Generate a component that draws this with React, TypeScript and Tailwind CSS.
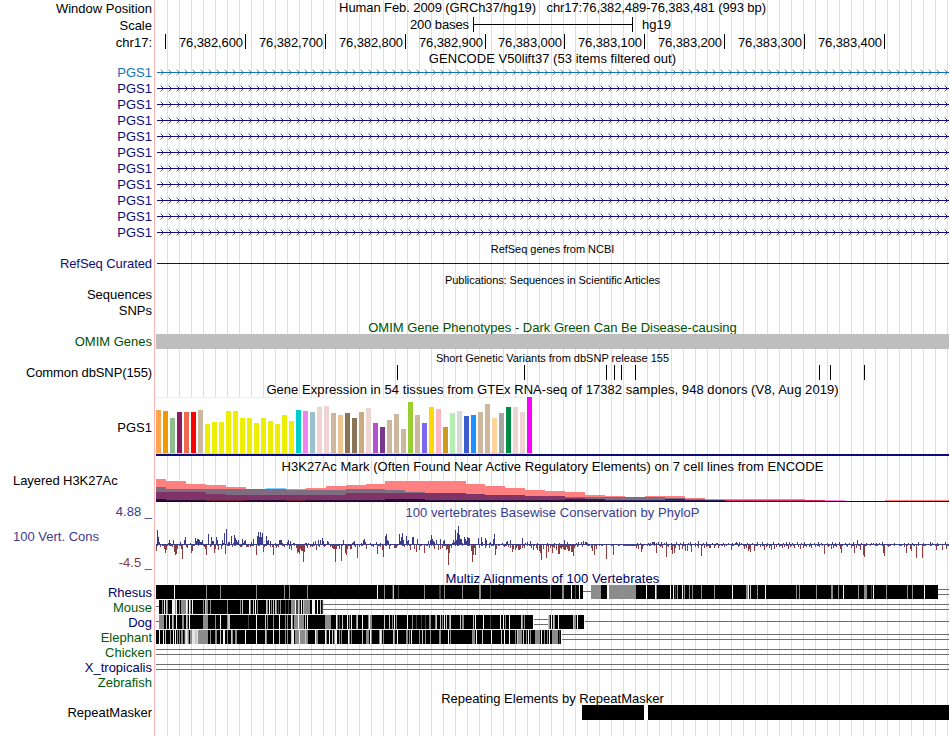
import type { ReactNode } from "react";

const NAVY = "#0c0c78";
const BLUE = "#1274b4";

type Stripe = [number, number, string];

const G = "#8c8c8c";
const L = "#c8c8c8";
const W = "#f4f4f4";
const D = "#444444";

const shift = (origin: number, list: Stripe[]): Stripe[] =>
  list.map(([x, w, c]) => [origin + Math.round(x / 3), w, c]);

const RHESUS: Stripe[] = [
  ...shift(150, [[72, 1, W], [168, 1, G], [210, 1, G], [318, 1, G], [402, 1, G], [417, 1, G], [471, 1, G], [681, 1, W], [702, 1, G]]),
  ...shift(380, [[36, 1, D], [39, 1, L], [54, 1, D], [132, 1, G], [177, 2, D], [192, 1, G], [246, 1, G], [297, 2, G], [330, 1, D], [510, 1, G], [546, 2, G], [573, 1, W], [585, 1, D], [597, 1, W], [633, 10, G]]),
  ...shift(600, [[0, 1, G], [21, 1, W], [24, 1, "#fff"], [27, 27, G], [138, 1, W], [165, 1, W], [168, 1, G], [210, 1, W], [219, 1, W], [225, 1, D], [231, 1, G], [246, 1, W], [252, 1, G], [267, 1, G], [276, 1, G], [303, 1, G], [342, 1, G], [396, 1, W], [438, 2, G], [444, 1, W], [450, 1, L], [471, 1, G], [495, 1, W], [588, 1, G], [597, 1, G], [648, 1, G], [693, 2, G], [714, 1, G], [729, 1, W], [774, 1, G], [792, 3, G], [813, 1, D], [819, 1, W], [858, 1, G], [921, 1, G], [936, 1, G], [972, 1, W]]),
];

const MOUSE: Stripe[] = shift(150, [
  [36, 1, G], [42, 1, W], [48, 1, L], [51, 1, G], [66, 3, W], [75, 1, G], [78, 1, W], [87, 1, G], [93, 1, G], [96, 4, G], [108, 1, W], [111, 1, L], [117, 1, W], [120, 1, G], [126, 1, W], [159, 1, G], [165, 1, L], [168, 2, G], [180, 1, G], [231, 1, G], [270, 1, G], [276, 1, L], [297, 1, W], [300, 1, G], [309, 1, L], [315, 1, W], [321, 1, G], [348, 1, L], [351, 1, G], [357, 1, W], [363, 1, G], [369, 1, L], [375, 1, L], [378, 1, G], [384, 1, D], [390, 1, G], [405, 1, D], [414, 1, D], [423, 4, G], [435, 1, W], [438, 2, D], [444, 1, L], [447, 1, G], [453, 1, W], [459, 1, L], [462, 1, G], [465, 5, G], [486, 3, W], [501, 1, W], [510, 1, L], [516, 1, D],
]);

const DOG: Stripe[] = [
  ...shift(150, [[27, 5, G], [48, 1, L], [57, 1, W], [66, 1, L], [69, 1, G], [78, 1, W], [96, 2, G], [108, 1, L], [111, 1, G], [117, 1, W], [159, 5, G], [195, 1, G], [210, 1, W], [231, 1, G], [234, 2, L], [294, 1, D], [318, 1, W], [345, 1, L], [351, 1, G], [369, 1, G], [387, 1, W], [405, 1, G], [411, 1, G], [423, 1, W], [426, 1, G], [432, 4, G], [444, 1, W], [447, 5, G], [465, 1, L], [471, 1, W], [525, 6, G], [558, 1, W], [561, 1, G], [567, 1, D], [576, 1, L], [591, 1, W], [597, 1, G], [603, 1, W], [618, 1, G], [621, 1, L], [636, 1, W], [654, 1, G], [657, 1, W], [660, 2, G]]),
  ...shift(380, [[12, 1, L], [27, 1, L], [36, 1, G], [42, 1, W], [48, 1, G], [81, 1, W], [96, 1, G], [108, 1, D], [123, 1, D], [135, 1, D], [147, 2, G], [165, 1, G], [168, 1, L], [180, 1, L], [186, 1, G], [192, 1, W], [198, 1, L], [207, 1, G], [210, 1, L], [240, 1, L], [246, 2, G], [279, 1, L], [285, 1, W], [309, 1, W], [330, 1, D], [360, 1, W], [369, 1, W], [375, 1, G], [387, 1, W], [423, 1, L], [426, 1, G], [432, 1, G], [504, 1, L], [507, 1, G], [513, 1, W], [519, 1, L], [522, 1, G], [534, 1, W], [579, 1, L], [582, 1, G], [585, 1, G], [591, 1, W]]),
];

const ELEPHANT: Stripe[] = [
  ...shift(150, [[27, 1, W], [39, 1, W], [45, 1, L], [60, 1, G], [69, 1, W], [75, 1, W], [81, 1, G], [87, 1, G], [93, 2, G], [102, 1, D], [105, 1, L], [108, 1, W], [111, 1, L], [114, 1, G], [120, 2, G], [126, 3, "#e4e4e4"], [135, 2, L], [141, 1, "#e4e4e4"], [144, 10, G], [180, 1, G], [195, 2, G], [210, 1, L], [219, 2, W], [231, 1, G], [243, 1, L], [246, 1, G], [255, 2, G], [285, 1, W], [318, 1, W], [345, 1, L], [348, 1, G], [369, 1, W], [387, 1, L], [405, 1, G], [411, 1, G], [423, 1, L], [426, 2, W], [435, 4, G], [447, 1, W], [450, 5, G], [465, 1, L], [468, 2, G], [495, 1, W], [498, 1, G], [501, 1, G], [525, 1, W], [528, 1, G], [537, 1, W], [546, 1, L], [552, 1, G], [555, 2, W], [567, 1, G], [573, 1, G], [594, 1, W], [597, 1, G], [603, 1, G], [636, 1, L], [648, 3, G], [660, 1, W], [663, 1, G], [687, 1, G], [690, 1, W], [699, 1, L]]),
  ...shift(380, [[3, 1, L], [9, 1, G], [39, 1, L], [42, 1, G], [51, 1, W], [78, 2, G], [87, 1, G], [93, 1, W], [117, 1, G], [126, 1, L], [135, 1, G], [150, 1, G], [177, 2, G], [204, 1, W], [210, 1, G], [276, 3, G], [288, 1, W], [306, 1, L], [333, 1, W], [363, 1, L], [372, 1, W], [387, 1, W], [405, 1, G], [411, 1, L], [414, 4, G], [429, 1, L], [438, 1, G], [444, 1, W], [450, 1, G], [465, 5, G], [483, 1, W], [492, 1, G], [501, 1, G], [507, 1, W], [516, 6, G], [537, 1, D]]),
];

const GTEX: [number, string][] = [
  [410, "#ffa54f"], [411, "#ee9a00"], [418, "#8fbc8f"], [412, "#8b1c62"], [412, "#ee6a50"], [412, "#ff0000"], [410, "#cdb79e"],
  [424, "#eeee00"], [422, "#eeee00"], [422, "#eeee00"], [411, "#eeee00"], [411, "#eeee00"], [418, "#eeee00"], [418, "#eeee00"],
  [423, "#eeee00"], [418, "#eeee00"], [421, "#eeee00"], [424, "#eeee00"], [415, "#eeee00"], [421, "#eeee00"],
  [410, "#00cdcd"], [411, "#ee82ee"], [412, "#9ac0cd"], [407, "#eed5d2"], [406, "#eed5d2"], [413, "#cdb79e"], [415, "#eec591"],
  [413, "#8b7355"], [418, "#8b7355"], [412, "#cdaa7d"], [408, "#eed5d2"], [423, "#b452cd"], [427, "#7a378b"], [420, "#cdb79e"],
  [414, "#cdb79e"], [429, "#cdb79e"], [402, "#9acd32"], [415, "#cdb79e"], [423, "#7a67ee"], [407, "#ffd700"], [409, "#ffb6c1"],
  [427, "#cd9b1d"], [413, "#b4eeb4"], [411, "#d9d9d9"], [416, "#3a5fcd"], [415, "#1e90ff"], [412, "#cdb79e"], [404, "#cdb79e"],
  [418, "#ffd39b"], [413, "#a6a6a6"], [407, "#008b45"], [407, "#eed5d2"], [412, "#eed5d2"], [397, "#ff00ff"],
];

// Each layer is a list of [start x, top y]; a step lasts until the next one.
const H3K: { color: string; steps: [number, number][]; end: number }[] = [
  { color: "#80d0ff", steps: [[266, 488]], end: 286 },
  { color: "#ff8080", end: 949, steps: [[156, 479], [166, 481], [186, 484], [206, 485], [226, 487], [246, 489], [266, 490], [286, 489], [306, 488], [326, 486], [346, 485], [366, 484], [385, 481], [466, 484], [485, 486], [505, 488], [525, 490], [545, 491], [565, 492], [585, 495], [605, 496], [625, 497], [645, 496], [685, 498], [705, 499], [805, 500], [845, 501], [885, 500]] },
  { color: "#806c80", end: 705, steps: [[156, 487], [166, 489], [286, 490], [326, 490], [346, 489], [385, 490], [405, 492], [425, 494], [466, 496], [565, 497], [665, 498], [685, 499]] },
  { color: "#803366", end: 605, steps: [[156, 492], [206, 494], [226, 495], [346, 493], [466, 494], [485, 495], [525, 496], [565, 498], [585, 499]] },
  { color: "#e0205c", end: 885, steps: [[705, 500], [845, 501]] },
  { color: "#ff80e0", end: 845, steps: [[825, 500]] },
  { color: "#2c2060", end: 725, steps: [[565, 499], [605, 500], [665, 499], [685, 500]] },
  { color: "#2a0f38", end: 605, steps: [[156, 499], [166, 500], [206, 500], [286, 500], [385, 499], [425, 500]] },
];

const wig = (origin: number, list: number[][]) => list.map(([x, h]) => [origin + Math.round(x / 3), h]);

const UP = [
  ...wig(150, [[21, 15], [24, 8], [27, 3], [33, 1], [39, 1], [54, 2], [57, 5], [60, 2], [69, 5], [72, 1], [90, 3], [102, 5], [105, 8], [120, 2], [135, 7], [138, 4], [141, 6], [144, 6], [147, 5], [150, 3], [153, 3], [156, 5], [174, 11], [177, 1], [183, 8], [186, 4], [189, 4], [198, 8], [201, 5], [210, 1], [216, 5], [219, 2], [222, 12], [228, 16], [231, 1], [234, 3], [237, 3], [243, 9], [249, 2], [252, 10], [255, 7], [258, 5], [261, 3], [264, 5], [276, 6], [279, 2], [282, 4], [285, 5], [303, 3], [309, 6], [321, 9], [324, 13], [327, 8], [330, 13], [333, 8], [336, 12], [348, 9], [351, 4], [354, 5], [360, 4], [363, 1], [375, 2], [387, 5], [390, 5], [393, 5], [396, 2], [411, 3], [414, 5], [420, 4], [426, 1], [429, 2], [432, 2], [435, 1], [465, 2], [468, 2], [474, 2], [489, 3], [495, 4], [504, 5], [510, 5], [516, 7], [519, 4], [531, 4], [534, 3], [579, 5], [606, 2], [609, 3], [612, 4], [615, 1], [633, 2], [639, 5], [642, 6], [645, 3]]),
  ...wig(360, [[27, 1], [30, 2], [48, 3], [60, 2], [75, 9], [78, 11], [81, 5], [84, 4], [117, 11], [120, 4], [123, 8], [126, 12], [129, 5], [138, 9], [141, 4], [144, 5], [156, 8], [159, 8], [171, 6], [204, 4], [210, 5], [213, 10], [216, 6], [219, 4], [222, 3], [228, 5], [240, 6], [243, 1], [249, 4], [252, 5], [264, 1], [276, 2], [279, 5], [282, 3], [285, 15], [288, 5], [291, 12], [294, 19], [297, 10], [300, 6], [303, 6], [306, 2], [312, 8], [315, 6], [318, 4], [321, 8], [324, 7], [327, 7], [354, 7], [363, 8], [366, 3], [375, 7], [378, 5], [387, 2], [390, 3], [399, 6], [402, 11], [405, 1], [426, 2], [438, 3], [441, 4], [450, 5], [486, 7], [495, 2], [501, 3], [510, 4], [531, 2], [561, 2], [612, 5], [621, 3]]),
  ...wig(550, [[12, 2], [27, 2], [42, 5], [51, 3], [78, 2], [84, 3], [93, 3], [99, 4], [105, 3], [108, 3], [111, 2], [261, 2], [270, 2], [294, 2], [300, 2], [306, 3], [309, 3], [312, 3], [318, 2], [324, 3], [333, 3], [342, 2], [348, 3], [363, 2], [378, 3], [390, 2], [399, 3], [414, 2], [420, 3], [435, 2], [444, 4], [459, 2], [468, 3], [486, 2], [498, 2], [501, 2], [519, 2], [534, 2], [546, 2], [555, 2], [558, 3], [561, 2], [567, 3], [573, 2], [591, 2], [606, 2], [621, 3], [636, 3], [651, 2], [669, 3], [684, 2], [699, 2], [708, 3], [717, 3], [726, 2], [741, 3], [753, 2], [762, 3], [780, 2], [792, 2], [804, 3], [813, 2], [831, 2], [846, 3], [855, 2], [867, 3], [885, 2], [897, 2], [909, 3], [921, 5], [933, 2], [948, 2], [963, 2], [969, 2], [978, 2], [987, 2], [996, 3], [1032, 2], [1062, 2], [1074, 2], [1086, 2], [1104, 3], [1119, 2], [1140, 3], [1146, 2], [1161, 2], [1185, 3]]),
];

const DOWN = [
  ...wig(150, [[18, 6], [30, 2], [36, 1], [42, 4], [45, 8], [48, 5], [63, 1], [66, 2], [72, 7], [75, 10], [78, 9], [81, 4], [93, 4], [96, 14], [108, 2], [111, 3], [123, 8], [126, 6], [159, 1], [162, 2], [165, 4], [168, 10], [180, 2], [192, 8], [195, 4], [204, 5], [213, 4], [225, 9], [246, 2], [270, 2], [273, 2], [288, 2], [291, 2], [294, 2], [300, 2], [318, 10], [339, 7], [342, 2], [360, 2], [366, 2], [369, 10], [378, 3], [384, 2], [402, 2], [417, 4], [423, 5], [438, 3], [441, 8], [444, 7], [447, 9], [450, 4], [453, 6], [456, 6], [459, 17], [462, 7], [471, 3], [480, 2], [486, 2], [498, 5], [507, 2], [522, 2], [540, 2], [546, 3], [549, 4], [552, 4], [555, 17], [558, 4], [567, 4], [573, 16], [585, 8], [588, 10], [591, 4], [600, 4], [603, 4], [615, 2], [621, 13], [627, 2], [648, 4]]),
  ...wig(360, [[39, 2], [51, 9], [60, 2], [66, 5], [69, 12], [87, 4], [102, 3], [105, 3], [108, 3], [132, 2], [150, 5], [162, 4], [168, 7], [177, 5], [192, 8], [207, 3], [222, 4], [234, 5], [240, 4], [246, 3], [258, 5], [261, 4], [264, 20], [267, 8], [273, 3], [333, 6], [336, 17], [339, 10], [342, 3], [345, 10], [357, 3], [375, 3], [387, 3], [405, 10], [408, 4], [432, 2], [444, 2], [450, 3], [456, 7], [459, 4], [465, 5], [468, 3], [474, 5], [477, 5], [480, 4], [486, 3], [492, 3], [513, 3], [519, 5], [528, 3], [531, 5], [537, 6], [540, 8], [543, 15], [549, 4], [558, 13], [564, 7], [570, 3], [576, 8], [582, 3], [588, 5], [597, 9], [603, 4], [609, 4], [615, 5], [621, 4], [627, 6], [636, 7], [639, 11]]),
  ...wig(550, [[6, 8], [9, 2], [18, 2], [24, 9], [27, 6], [30, 3], [36, 2], [42, 5], [48, 2], [54, 6], [57, 3], [63, 7], [66, 4], [69, 9], [72, 3], [81, 2], [96, 2], [123, 3], [126, 6], [132, 10], [138, 4], [168, 14], [189, 10], [258, 3], [264, 4], [273, 7], [276, 4], [318, 8], [330, 2], [336, 3], [348, 12], [354, 2], [363, 5], [366, 9], [372, 8], [375, 3], [387, 5], [396, 4], [405, 6], [411, 6], [423, 7], [435, 2], [444, 3], [453, 11], [462, 3], [468, 2], [477, 3], [480, 3], [492, 3], [504, 3], [522, 2], [543, 5], [564, 2], [582, 4], [588, 3], [594, 6], [597, 4], [600, 7], [612, 6], [630, 2], [642, 5], [648, 2], [657, 3], [663, 5], [672, 4], [678, 2], [687, 2], [696, 3], [702, 2], [714, 4], [720, 2], [732, 3], [744, 2], [750, 4], [759, 3], [768, 2], [777, 2], [783, 3], [795, 2], [807, 2], [822, 9], [834, 2], [843, 4], [849, 3], [858, 2], [870, 4], [873, 8], [891, 2], [903, 3], [912, 8], [918, 3], [930, 5], [939, 10], [942, 12], [999, 8], [1002, 11], [1014, 2], [1062, 2], [1068, 8], [1080, 4], [1083, 6], [1098, 13], [1116, 13], [1158, 5], [1176, 5], [1188, 4]]),
];

const GENES = [BLUE, ...Array<string>(10).fill(NAVY)];

const COORDS: { text: string; width: string }[] = [
  { text: "", width: "w-[10px]" },
  { text: "76,382,600", width: "w-[80px]" },
  { text: "76,382,700", width: "w-[80px]" },
  { text: "76,382,800", width: "w-[80px]" },
  { text: "76,382,900", width: "w-[80px]" },
  { text: "76,383,000", width: "w-[79px]" },
  { text: "76,383,100", width: "w-[80px]" },
  { text: "76,383,200", width: "w-[80px]" },
  { text: "76,383,300", width: "w-[80px]" },
  { text: "76,383,400", width: "w-[80px]" },
];

function Title({ h, children, className = "" }: { h: string; children: ReactNode; className?: string }) {
  return (
    <div className={`ml-[156px] flex w-[793px] items-center justify-center whitespace-pre ${h} ${className}`}>
      <span>{children}</span>
    </div>
  );
}

function Row({ h, label, labelClass = "", children }: { h: string; label: string; labelClass?: string; children?: ReactNode }) {
  return (
    <div className={`flex items-center ${h}`}>
      <div className={`w-[152px] shrink-0 whitespace-pre text-right ${labelClass}`}>{label}</div>
      <div className="ml-1 flex h-full w-[793px] shrink-0">{children}</div>
    </div>
  );
}

// Drawings use the page's own x scale, which starts at 156 where the tracks do.
function Track({ top, height, children }: { top: number; height: number; children: ReactNode }) {
  return (
    <svg width={793} height={height} viewBox={`156 ${top} 793 ${height}`} shapeRendering="crispEdges" className="block shrink-0">
      {children}
    </svg>
  );
}

function HLines({ x, to, ys }: { x: number; to: number; ys: number[] }) {
  return (
    <>
      {ys.map((y) => (
        <rect key={y} x={x} y={y} width={to - x} height={1} fill="#6e6e6e" />
      ))}
    </>
  );
}

function Blocks({ top, bars, stripes }: { top: number; bars: [number, number][]; stripes: Stripe[] }) {
  return (
    <>
      {bars.map(([a, b]) => (
        <rect key={a} x={a} y={top} width={b - a} height={14} fill="#000" />
      ))}
      {stripes.map(([x, w, c], i) => (
        <rect key={i} x={x} y={top} width={w} height={14} fill={c} />
      ))}
    </>
  );
}

function Gene({ color, first }: { color: string; first: number }) {
  return (
    <Track top={0} height={16}>
      <rect x={157} y={8} width={792} height={1} fill={color} />
      {Array.from({ length: 99 }, (_, i) => {
        const x = first + i * 8;
        return (
          <g key={i} fill={color}>
            <rect x={x} y={7} width={1} height={1} opacity={0.85} />
            <rect x={x} y={9} width={1} height={1} opacity={0.85} />
            <rect x={x - 1} y={6} width={1} height={1} opacity={0.75} />
            <rect x={x - 1} y={10} width={1} height={1} opacity={0.75} />
            <rect x={x - 2} y={5} width={1} height={1} opacity={0.3} />
            <rect x={x - 2} y={11} width={1} height={1} opacity={0.3} />
          </g>
        );
      })}
    </Track>
  );
}

export default function App() {
  return (
    <div className="h-[736px] w-[950px] overflow-hidden bg-white font-['Liberation_Sans',Arial,sans-serif] text-[13px] leading-[15px] text-black">
      <div className="h-full w-[949px] bg-[linear-gradient(to_right,#ffb4b4_1px,transparent_1px),repeating-linear-gradient(to_right,#dcdcf5_0px,#dcdcf5_1px,transparent_1px,transparent_12px)] bg-[length:1px_100%,783px_100%] bg-[position:154px_0,167px_0] bg-no-repeat">
        <Row h="h-[17px]" label="Window Position">
          <div className="flex w-full items-center justify-center whitespace-pre pb-[2px] tracking-[-0.09px]">
            Human Feb. 2009 (GRCh37/hg19)   chr17:76,382,489-76,383,481 (993 bp)
          </div>
        </Row>
        <Row h="h-[17px]" label="Scale">
          <div className="w-[313px] shrink-0 text-right tracking-[-0.1px]">200 bases</div>
          <div className="ml-1 flex h-[15px] w-[160px] items-center border-x border-black">
            <div className="h-px w-full bg-black" />
          </div>
          <div className="ml-[9px]">hg19</div>
        </Row>
        <Row h="h-[17px]" label="chr17:">
          {COORDS.map((c) => (
            <div key={c.text} className={`mb-[2px] shrink-0 border-r border-black pr-[2px] text-right leading-[17px] tracking-[-0.1px] ${c.width}`}>
              {c.text}
            </div>
          ))}
        </Row>
        <Title h="h-[13px]" className="pt-[2px] tracking-[0.04px]">GENCODE V50lift37 (53 items filtered out)</Title>

        {GENES.map((color, i) => (
          <Row key={i} h="h-4" label="PGS1" labelClass={i === 0 ? "text-[#1274b4]" : "text-[#0c0c78]"}>
            <Gene color={color} first={162} />
          </Row>
        ))}

        <Title h="h-[17px]" className="pt-[2px] text-[11px] tracking-[-0.03px]">RefSeq genes from NCBI</Title>
        <Row h="h-[14px]" label="RefSeq Curated" labelClass="pb-[2px] tracking-[-0.08px] text-[#0c0c78]">
          <div className="ml-px mt-[6px] h-px w-full bg-[#0c0c78]" />
        </Row>
        <Title h="h-[18px]" className="text-[11px] tracking-[-0.06px]">Publications: Sequences in Scientific Articles</Title>
        <Row h="h-[13px]" label="Sequences" labelClass="pb-[2px]" />
        <Row h="h-[18px]" label="SNPs" labelClass="pb-[2px]" />
        <Title h="h-[14px]" className="text-[#005000]">OMIM Gene Phenotypes - Dark Green Can Be Disease-causing</Title>
        <Row h="h-[15px]" label="OMIM Genes" labelClass="text-[#005000]">
          <div className="h-full w-full bg-[#bebebe]" />
        </Row>
        <Title h="h-[16px]" className="pt-[2px] text-[11px]">Short Genetic Variants from dbSNP release 155</Title>
        <Row h="h-[15px]" label="Common dbSNP(155)" labelClass="tracking-[-0.11px]">
          <Track top={0} height={15}>
            {[397, 524, 606, 614, 621, 635, 819, 830, 864].map((x) => (
              <rect key={x} x={x} y={0} width={1} height={15} fill="#000" />
            ))}
          </Track>
        </Row>
        <Title h="h-[17px]" className="pt-[2px] tracking-[0.055px]">Gene Expression in 54 tissues from GTEx RNA-seq of 17382 samples, 948 donors (V8, Aug 2019)</Title>

        <Row h="h-[60px]" label="PGS1">
          <Track top={397} height={60}>
            <rect x={156} y={397} width={377} height={57} fill="#fff" />
            <rect x={156} y={397} width={377} height={1} fill="#eeeeee" />
            <rect x={156} y={453} width={377} height={1} fill="#d4d4d4" />
            {GTEX.map(([y, c], i) => (
              <rect key={i} x={156 + i * 7} y={y} width={5} height={453 - y} fill={c} />
            ))}
            <rect x={156} y={454} width={793} height={2} fill={NAVY} />
          </Track>
        </Row>

        <div className="flex h-[46px]">
          <div className="w-[156px] shrink-0 pl-[13px] pt-4 tracking-[-0.06px]">Layered H3K27Ac</div>
          <div>
            <div className="flex h-[18px] w-[793px] items-center justify-center whitespace-pre tracking-[0.05px]">
              H3K27Ac Mark (Often Found Near Active Regulatory Elements) on 7 cell lines from ENCODE
            </div>
            <Track top={475} height={28}>
              {H3K.map((layer) =>
                layer.steps.map(([x, y], i) => {
                  const to = i + 1 < layer.steps.length ? layer.steps[i + 1][0] : layer.end;
                  return <rect key={`${layer.color}${x}`} x={x} y={y} width={to - x} height={502 - y} fill={layer.color} />;
                }),
              )}
              <rect x={156} y={501} width={793} height={1} fill="#180828" />
              <rect x={206} y={500} width={40} height={1} fill="#681c34" />
              <rect x={286} y={500} width={20} height={1} fill="#681c34" />
            </Track>
          </div>
        </div>

        <div className="flex h-[68px]">
          <div className="flex w-[156px] shrink-0 flex-col justify-between pr-1 text-[#3c3c8c]">
            <div className="pt-px text-right">4.88 _</div>
            <div className="pb-[2px] pl-[13px]">100 Vert. Cons</div>
            <div className="pb-px text-right text-[#8c3c3c]">-4.5 _</div>
          </div>
          <div>
            <div className="flex h-[18px] w-[793px] items-center justify-center whitespace-pre tracking-[0.04px] text-[#3c3c8c]">
              100 vertebrates Basewise Conservation by PhyloP
            </div>
            <Track top={521} height={50}>
              <rect x={156} y={544} width={793} height={1} fill="#3c3c8c" />
              {Array.from({ length: 198 }, (_, i) => (
                <rect key={i} x={157 + i * 4 + (i % 3)} y={545} width={1 + (i % 2)} height={1} fill="#8c3c3c" />
              ))}
              <rect x={624} y={545} width={11} height={1} fill="#8c3c3c" />
              {UP.map(([x, h]) => (
                <rect key={`u${x}`} x={x} y={545 - h} width={1} height={h} fill="#3c3c8c" />
              ))}
              {DOWN.map(([x, h]) => (
                <rect key={`d${x}`} x={x} y={545} width={1} height={h} fill="#8c3c3c" />
              ))}
            </Track>
          </div>
        </div>

        <Title h="h-[14px]" className="tracking-[0.08px] text-[#000064]">Multiz Alignments of 100 Vertebrates</Title>
        <Row h="h-[15px]" label="Rhesus" labelClass="text-[#000064]">
          <Track top={585} height={15}>
            <HLines x={583} to={591} ys={[591]} />
            <HLines x={938} to={949} ys={[589, 594]} />
            <Blocks top={585} bars={[[156, 583], [601, 938]]} stripes={RHESUS} />
          </Track>
        </Row>
        <Row h="h-[15px]" label="Mouse" labelClass="text-[#005a0a]">
          <Track top={600} height={15}>
            <HLines x={156} to={159} ys={[606]} />
            <HLines x={323} to={949} ys={[604, 609]} />
            <Blocks top={600} bars={[[159, 323]]} stripes={MOUSE} />
          </Track>
        </Row>
        <Row h="h-[15px]" label="Dog" labelClass="text-[#000064]">
          <Track top={615} height={15}>
            <HLines x={156} to={159} ys={[621]} />
            <HLines x={534} to={548} ys={[619, 624]} />
            <HLines x={585} to={949} ys={[621]} />
            <Blocks top={615} bars={[[159, 533], [548, 584]]} stripes={DOG} />
          </Track>
        </Row>
        <Row h="h-[15px]" label="Elephant" labelClass="text-[#005a0a]">
          <Track top={630} height={15}>
            <HLines x={562} to={949} ys={[634, 639]} />
            <Blocks top={630} bars={[[156, 561]]} stripes={ELEPHANT} />
          </Track>
        </Row>
        <Row h="h-[15px]" label="Chicken" labelClass="text-[#005a0a]">
          <Track top={645} height={15}>
            <HLines x={156} to={949} ys={[649, 654]} />
          </Track>
        </Row>
        <Row h="h-[15px]" label="X_tropicalis" labelClass="text-[#000064]">
          <Track top={660} height={15}>
            <HLines x={156} to={949} ys={[664, 669]} />
          </Track>
        </Row>
        <Row h="h-[15px]" label="Zebrafish" labelClass="text-[#005a0a]" />

        <Title h="h-[15px]" className="pt-[2px]">Repeating Elements by RepeatMasker</Title>
        <Row h="h-[15px]" label="RepeatMasker">
          <div className="ml-[426px] h-full w-[62px] bg-black" />
          <div className="h-full w-1 bg-white" />
          <div className="h-full w-[301px] bg-black" />
        </Row>
      </div>
    </div>
  );
}
